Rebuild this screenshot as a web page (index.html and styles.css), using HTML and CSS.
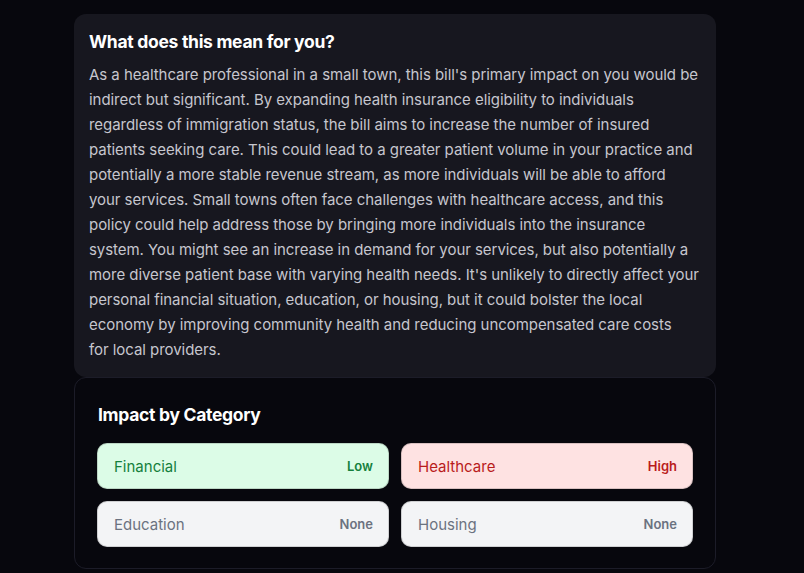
FILE: index.html
```html
<!DOCTYPE html>
<html lang="en">
<head>
    <meta charset="UTF-8">
    <meta name="viewport" content="width=device-width, initial-scale=1.0">
    <title>Bill Impact</title>
<link rel="stylesheet" href="styles.css">
</head>
<body>
    <div class="page">
        <!-- Personal summary -->
        <div class="summary">
            <h2>What does this mean for you?</h2>
            <p>As a healthcare professional in a small town, this bill's primary impact on you would be indirect but significant. By expanding health insurance eligibility to individuals regardless of immigration status, the bill aims to increase the number of insured patients seeking care. This could lead to a greater patient volume in your practice and potentially a more stable revenue stream, as more individuals will be able to afford your services. Small towns often face challenges with healthcare access, and this policy could help address those by bringing more individuals into the insurance system. You might see an increase in demand for your services, but also potentially a more diverse patient base with varying health needs. It's unlikely to directly affect your personal financial situation, education, or housing, but it could bolster the local economy by improving community health and reducing uncompensated care costs for&nbsp;local&nbsp;providers.</p>
        </div>

        <!-- Impact by category -->
        <div class="impact">
            <h2>Impact by Category</h2>
            <div class="grid">
                <div class="pill low"><span class="name">Financial</span><span class="level">Low</span></div>
                <div class="pill high"><span class="name">Healthcare</span><span class="level">High</span></div>
                <div class="pill none"><span class="name">Education</span><span class="level">None</span></div>
                <div class="pill none"><span class="name">Housing</span><span class="level">None</span></div>
            </div>
        </div>
    </div>
</body>
</html>
```

FILE: styles.css
```css
body {
    margin: 0;
    background-color: #07070d;
    font-family: "Inter", "Noto Sans", sans-serif;
    color: #fff;
}

.page {
    width: 642px;
    padding-top: 14px;
    margin-left: 74px;
}

h2 {
    margin: 0;
    font-size: 17.5px;
    line-height: 28px;
    font-weight: 700;
    letter-spacing: -0.3px;
    color: #fff;
}

.summary {
    background-color: #17171f;
    border-radius: 12px;
    padding: 14px 15px 15px 15px;
}

.summary p {
    margin: 6px 0 0 0;
    font-size: 15px;
    line-height: 25px;
    letter-spacing: -0.05px;
    color: #c6c6ce;
}

.impact {
    border: 1px solid #1c1c28;
    border-radius: 12px;
    padding: 23px 22px 21px 22px;
}

.impact h2 {
    margin-left: 1px;
}

.grid {
    margin-top: 14px;
    display: grid;
    grid-template-columns: 1fr 1fr;
    gap: 12px;
}

.pill {
    height: 46px;
    box-sizing: border-box;
    border-radius: 10px;
    padding: 0 15px 0 16px;
    display: flex;
    align-items: center;
    justify-content: space-between;
    border: 1px solid rgba(0, 0, 0, 0.15);
}

.pill .name {
    font-size: 15px;
}

.pill .level {
    font-size: 13px;
    font-weight: 600;
}

.low {
    background-color: #dcfce7;
    color: #15803d;
}

.high {
    background-color: #fee2e2;
    color: #b91c1c;
}

.none {
    background-color: #f3f4f6;
    color: #6b7280;
}
```
